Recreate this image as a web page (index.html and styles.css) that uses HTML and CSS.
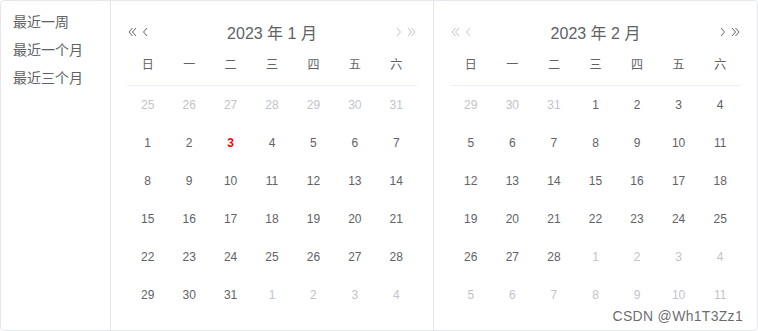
FILE: index.html
```html
<!DOCTYPE html>
<html lang="zh-CN">
<head>
    <meta charset="UTF-8">
    <title>日期范围选择</title>
    <link rel="stylesheet" href="styles.css">
</head>
<body>
    <div class="picker">
        <div class="sidebar">
            <button class="shortcut">最近一周</button>
            <button class="shortcut">最近一个月</button>
            <button class="shortcut">最近三个月</button>
        </div>
        <div class="body">
            <div class="content is-left">
                <div class="header">
                    <div class="arrows">
                        <svg class="ico" width="9" height="10" viewBox="0 0 9 10"><path d="M4.5 1 L1 5 L4.5 9 M8 1 L4.5 5 L8 9"/></svg>
                        <svg class="ico" width="6" height="10" viewBox="0 0 6 10"><path d="M5 1 L1.5 5 L5 9"/></svg>
                    </div>
                    <div class="title">2023 年 1 月</div>
                    <div class="arrows right off">
                        <svg class="ico" width="6" height="10" viewBox="0 0 6 10"><path d="M1 1 L4.5 5 L1 9"/></svg>
                        <svg class="ico" width="9" height="10" viewBox="0 0 9 10"><path d="M1 1 L4.5 5 L1 9 M4.5 1 L8 5 L4.5 9"/></svg>
                    </div>
                </div>
                <table class="days">
                    <thead>
                        <tr><th>日</th><th>一</th><th>二</th><th>三</th><th>四</th><th>五</th><th>六</th></tr>
                    </thead>
                    <tbody>
                        <tr><td class="other">25</td><td class="other">26</td><td class="other">27</td><td class="other">28</td><td class="other">29</td><td class="other">30</td><td class="other">31</td></tr>
                        <tr><td>1</td><td>2</td><td class="today">3</td><td>4</td><td>5</td><td>6</td><td>7</td></tr>
                        <tr><td>8</td><td>9</td><td>10</td><td>11</td><td>12</td><td>13</td><td>14</td></tr>
                        <tr><td>15</td><td>16</td><td>17</td><td>18</td><td>19</td><td>20</td><td>21</td></tr>
                        <tr><td>22</td><td>23</td><td>24</td><td>25</td><td>26</td><td>27</td><td>28</td></tr>
                        <tr><td>29</td><td>30</td><td>31</td><td class="other">1</td><td class="other">2</td><td class="other">3</td><td class="other">4</td></tr>
                    </tbody>
                </table>
            </div>
            <div class="content is-right">
                <div class="header">
                    <div class="arrows off">
                        <svg class="ico" width="9" height="10" viewBox="0 0 9 10"><path d="M4.5 1 L1 5 L4.5 9 M8 1 L4.5 5 L8 9"/></svg>
                        <svg class="ico" width="6" height="10" viewBox="0 0 6 10"><path d="M5 1 L1.5 5 L5 9"/></svg>
                    </div>
                    <div class="title">2023 年 2 月</div>
                    <div class="arrows right">
                        <svg class="ico" width="6" height="10" viewBox="0 0 6 10"><path d="M1 1 L4.5 5 L1 9"/></svg>
                        <svg class="ico" width="9" height="10" viewBox="0 0 9 10"><path d="M1 1 L4.5 5 L1 9 M4.5 1 L8 5 L4.5 9"/></svg>
                    </div>
                </div>
                <table class="days">
                    <thead>
                        <tr><th>日</th><th>一</th><th>二</th><th>三</th><th>四</th><th>五</th><th>六</th></tr>
                    </thead>
                    <tbody>
                        <tr><td class="other">29</td><td class="other">30</td><td class="other">31</td><td>1</td><td>2</td><td>3</td><td>4</td></tr>
                        <tr><td>5</td><td>6</td><td>7</td><td>8</td><td>9</td><td>10</td><td>11</td></tr>
                        <tr><td>12</td><td>13</td><td>14</td><td>15</td><td>16</td><td>17</td><td>18</td></tr>
                        <tr><td>19</td><td>20</td><td>21</td><td>22</td><td>23</td><td>24</td><td>25</td></tr>
                        <tr><td>26</td><td>27</td><td>28</td><td class="other">1</td><td class="other">2</td><td class="other">3</td><td class="other">4</td></tr>
                        <tr><td class="other">5</td><td class="other">6</td><td class="other">7</td><td class="other">8</td><td class="other">9</td><td class="other">10</td><td class="other">11</td></tr>
                    </tbody>
                </table>
            </div>
        </div>
        <div class="watermark">CSDN @Wh1T3Zz1</div>
    </div>
</body>
</html>
```

FILE: styles.css
```css
* {
    margin: 0;
    padding: 0;
    box-sizing: border-box;
}

body {
    font-family: "Liberation Sans", "Noto Sans CJK SC", sans-serif;
    background: #fff;
    color: #606266;
}

.picker {
    position: relative;
    width: 758px;
    height: 331px;
    border: 1px solid #e4e7ed;
    border-radius: 4px;
    background: #fff;
    display: flex;
}

.sidebar {
    width: 110px;
    flex-shrink: 0;
    border-right: 1px solid #e4e7ed;
    padding-top: 7px;
    display: flex;
    flex-direction: column;
}

.shortcut {
    font-family: inherit;
    font-size: 14px;
    line-height: 28px;
    color: #606266;
    background: none;
    border: 0;
    text-align: left;
    padding-left: 12px;
}

.body {
    flex: 1;
    display: flex;
}

.content {
    width: 50%;
    padding: 16px;
}

.content.is-left {
    border-right: 1px solid #e4e7ed;
}

.header {
    height: 28px;
    display: grid;
    grid-template-columns: 1fr auto 1fr;
    align-items: center;
}

.title {
    font-size: 16px;
    color: #606266;
    padding-top: 2px;
}

.arrows {
    display: flex;
    align-items: center;
    gap: 5px;
    padding-left: 1px;
    padding-top: 1px;
}

.arrows.right {
    justify-content: flex-end;
    padding-left: 0;
    padding-right: 1px;
}

.ico path {
    fill: none;
    stroke: #606266;
    stroke-width: 1;
}

.arrows.off .ico path {
    stroke: #c0c4cc;
}

.days {
    width: 100%;
    border-collapse: collapse;
    table-layout: fixed;
    font-size: 12px;
}

.days th {
    font-weight: 400;
    color: #606266;
    padding: 8px 0;
    line-height: 24px;
    border-bottom: 1px solid #ebeef5;
}

.days td {
    height: 38px;
    text-align: center;
    color: #606266;
}

.days td.other {
    color: #c0c4cc;
}

.days td.today {
    color: #f00;
    font-weight: 700;
}

.watermark {
    position: absolute;
    right: 14px;
    bottom: 6px;
    font-size: 14px;
    letter-spacing: 0.3px;
    color: rgba(80, 80, 80, 0.85);
}
```
